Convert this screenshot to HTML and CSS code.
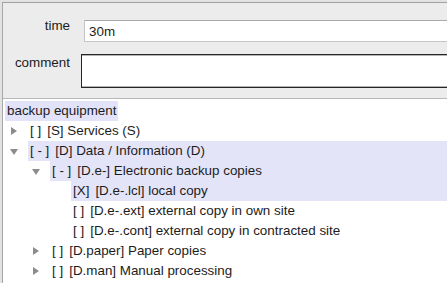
FILE: index.html
```html
<!DOCTYPE html>
<html lang="en">
<head>
  <meta charset="UTF-8" />
  <title>backup equipment</title>
  <link rel="stylesheet" href="styles.css">
</head>
<body>
  <div class="window">
    <div class="form">
      <label class="label">time</label>
      <input class="field time" type="text" value="30m" />
      <label class="label">comment</label>
      <div class="field comment"></div>
    </div>

    <div class="tree">
      <div class="node root"><span class="text">backup equipment</span></div>
      <div class="node lvl1">
        <span class="toggle closed"></span>
        <span class="text"><span class="check">[ ]</span>[S] Services (S)</span>
      </div>
      <div class="node lvl1 hl">
        <span class="toggle open"></span>
        <span class="text"><span class="check">[ - ]</span>[D] Data / Information (D)</span>
      </div>
      <div class="node lvl2 hl">
        <span class="toggle open"></span>
        <span class="text"><span class="check">[ - ]</span>[D.e-] Electronic backup copies</span>
      </div>
      <div class="node lvl3 hl">
        <span class="text"><span class="check">[X]</span>[D.e-.lcl] local copy</span>
      </div>
      <div class="node lvl3">
        <span class="text"><span class="check">[ ]</span>[D.e-.ext] external copy in own site</span>
      </div>
      <div class="node lvl3">
        <span class="text"><span class="check">[ ]</span>[D.e-.cont] external copy in contracted site</span>
      </div>
      <div class="node lvl2">
        <span class="toggle closed"></span>
        <span class="text"><span class="check">[ ]</span>[D.paper] Paper copies</span>
      </div>
      <div class="node lvl2">
        <span class="toggle closed"></span>
        <span class="text"><span class="check">[ ]</span>[D.man] Manual processing</span>
      </div>
    </div>
  </div>
</body>
</html>
```

FILE: styles.css
```css
html, body {
  margin: 0;
  height: 100%;
  overflow: hidden;
}
body {
  background: #e2e2e2;
  font-family: "Liberation Sans", Arial, sans-serif;
  font-size: 13.4px;
  color: #1c1c1c;
}
.window {
  margin: 2px 0 0 2px;
  border-top: 1px solid #a2a2a2;
  border-left: 1px solid #a8a8a8;
  height: calc(100% - 3px);
  background: #fff;
  overflow: hidden;
}
.form {
  display: grid;
  grid-template-columns: 67px 1fr;
  column-gap: 11px;
  row-gap: 13px;
  padding: 15px 0 10px 0;
  background: #ececec;
  border-bottom: 1px solid #b8b8b8;
}
.label {
  text-align: right;
  line-height: 16px;
}
.field {
  box-sizing: border-box;
  margin-right: -10px;
  background: #fff;
  font: inherit;
  color: inherit;
}
.time {
  margin-left: 3px;
  margin-top: 2px;
  height: 22px;
  padding: 0 0 0 4px;
  border: 1px solid #c6c6c6;
  border-top-color: #a9a9a9;
  outline: none;
}
.comment {
  margin-top: -1px;
  height: 34px;
  border: 1px solid #262626;
  box-shadow: inset 0 1px 0 #b4b4b4, inset 0 -1px 0 #b4b4b4;
}
.tree {
  padding-top: 2px;
}
.node {
  display: flex;
  align-items: center;
  height: 20px;
  white-space: nowrap;
}
.root {
  padding-left: 2px;
}
.root .text {
  background: #e2e2f8;
  padding: 0 2px;
  line-height: 16px;
}
.lvl1 { padding-left: 4px; }
.lvl2 { padding-left: 26px; }
.lvl3 { padding-left: 68px; }
.toggle {
  width: 21px;
  height: 20px;
  flex: none;
  position: relative;
}
.toggle.closed::before {
  content: "";
  position: absolute;
  left: 4px;
  top: 6px;
  border-left: 6px solid #8c8c8c;
  border-top: 4px solid transparent;
  border-bottom: 4px solid transparent;
}
.toggle.open::before {
  content: "";
  position: absolute;
  left: 3px;
  top: 8px;
  border-top: 6px solid #8c8c8c;
  border-left: 4px solid transparent;
  border-right: 4px solid transparent;
}
.node .text {
  line-height: 20px;
}
.hl .text {
  flex: 1;
  background: #e4e4f8;
  padding-left: 2px;
}
.node:not(.root):not(.hl) .text {
  padding-left: 2px;
}
.check {
  margin-right: 6px;
}
```
